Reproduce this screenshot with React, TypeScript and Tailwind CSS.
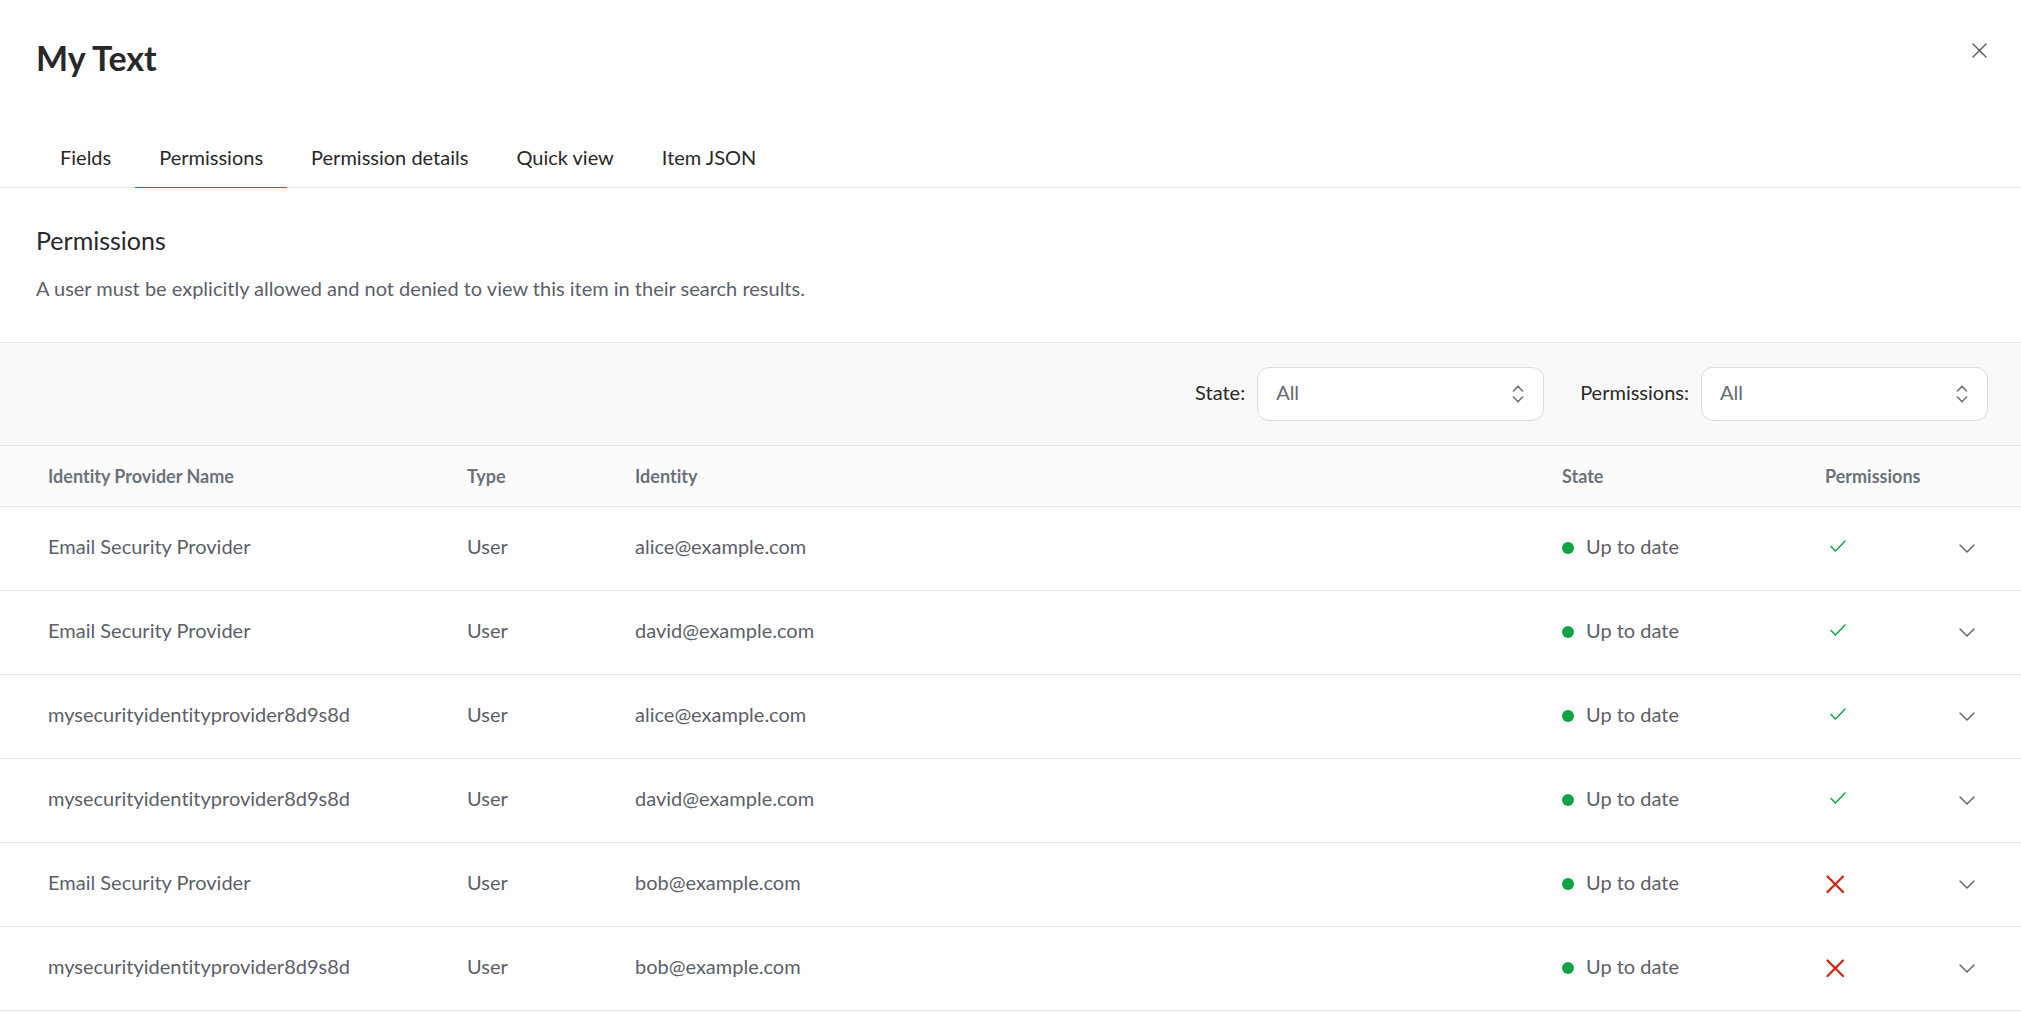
import React, { useState } from 'react';

interface PermissionRow {
  id: number;
  provider: string;
  type: string;
  identity: string;
  allowed: boolean;
}

const TABS = ['Fields', 'Permissions', 'Permission details', 'Quick view', 'Item JSON'];

const ROWS: PermissionRow[] = [
  { id: 1, provider: 'Email Security Provider', type: 'User', identity: 'alice@example.com', allowed: true },
  { id: 2, provider: 'Email Security Provider', type: 'User', identity: 'david@example.com', allowed: true },
  { id: 3, provider: 'mysecurityidentityprovider8d9s8d', type: 'User', identity: 'alice@example.com', allowed: true },
  { id: 4, provider: 'mysecurityidentityprovider8d9s8d', type: 'User', identity: 'david@example.com', allowed: true },
  { id: 5, provider: 'Email Security Provider', type: 'User', identity: 'bob@example.com', allowed: false },
  { id: 6, provider: 'mysecurityidentityprovider8d9s8d', type: 'User', identity: 'bob@example.com', allowed: false },
];

interface IconProps {
  d: string;
  width: number;
  height: number;
  stroke: number;
  className?: string;
}

function Icon({ d, width, height, stroke, className }: IconProps) {
  return (
    <svg
      width={width}
      height={height}
      viewBox={`0 0 ${width} ${height}`}
      fill="none"
      stroke="currentColor"
      strokeWidth={stroke}
      strokeLinecap="round"
      strokeLinejoin="round"
      className={className}
      aria-hidden="true"
    >
      <path d={d} />
    </svg>
  );
}

interface FilterProps {
  id: string;
  label: string;
  options: string[];
}

function Filter({ id, label, options }: FilterProps) {
  return (
    <div className="flex items-center gap-3">
      <label htmlFor={id} className="pb-1 text-[#282829]">
        {label}
      </label>
      <div className="grid w-[287px] items-center">
        <select
          id={id}
          className="col-start-1 row-start-1 h-[54px] w-full appearance-none rounded-xl border border-[#d9dddd] bg-white px-[18px] pb-1 text-[#626971] outline-none focus:border-blue-500"
        >
          {options.map((option) => (
            <option key={option}>{option}</option>
          ))}
        </select>
        <Icon
          d="M1.5 6 6 1.2 10.5 6M1.5 12 6 16.8 10.5 12"
          width={12}
          height={18}
          stroke={1.6}
          className="pointer-events-none col-start-1 row-start-1 mr-5 justify-self-end text-[#6b7280]"
        />
      </div>
    </div>
  );
}

export default function App() {
  const [activeTab, setActiveTab] = useState('Permissions');
  const [expanded, setExpanded] = useState<number | null>(null);

  return (
    <div className="min-h-screen bg-white font-['Lato',sans-serif] text-xl leading-7 text-[#5b5f69] [font-variant-ligatures:none]">
      <header className="flex items-start justify-between pt-8 pr-[30px] pl-9">
        <h1 className="pt-1 text-[34px] leading-[44px] font-bold text-[#282829]">My Text</h1>
        <button type="button" aria-label="Close" className="mt-[7px] p-1 text-[#4f5763]">
          <Icon d="M1 1 14 14M14 1 1 14" width={15} height={15} stroke={1.4} />
        </button>
      </header>

      {/* Tabs */}
      <div role="tablist" className="mt-[47px] flex border-b border-[#e5e8e8] px-9">
        {TABS.map((tab) => (
          <button
            key={tab}
            type="button"
            role="tab"
            aria-selected={activeTab === tab}
            onClick={() => setActiveTab(tab)}
            className={`-mb-px border-b px-6 pt-4 pb-4 text-[#282829] ${
              activeTab === tab ? 'border-[#1372ec]' : 'border-transparent'
            }`}
          >
            {tab}
          </button>
        ))}
      </div>

      <section className="px-9 pt-9 pb-10">
        <h2 className="text-[25px] leading-8 text-[#282829]">Permissions</h2>
        <p className="mt-[18px]">
          A user must be explicitly allowed and not denied to view this item in their search results.
        </p>
      </section>

      {/* Filters */}
      <div className="flex items-center justify-end gap-9 border-y border-[#e5e8e8] bg-[#f9f9f9] py-6 pr-[33px] pl-9">
        <Filter id="state" label="State:" options={['All', 'Up to date', 'Out of date']} />
        <Filter id="permissions" label="Permissions:" options={['All', 'Allowed', 'Denied']} />
      </div>

      <table className="w-full table-fixed text-left">
        <colgroup>
          <col className="w-[467px]" />
          <col className="w-[168px]" />
          <col />
          <col className="w-[263px]" />
          <col className="w-[123px]" />
          <col className="w-[73px]" />
        </colgroup>
        <thead>
          <tr className="h-[60px] border-b border-[#e5e8e8] bg-[#fcfcfc] text-lg leading-7 text-[#6b727c]">
            <th className="pl-12 font-bold">Identity Provider Name</th>
            <th className="font-bold">Type</th>
            <th className="font-bold">Identity</th>
            <th className="font-bold">State</th>
            <th className="font-bold">Permissions</th>
            <th aria-label="Details" />
          </tr>
        </thead>
        <tbody>
          {ROWS.map((row) => (
            <tr key={row.id} className="h-[84px] border-b border-[#e5e8e8]">
              <td className="pb-1 pl-12">{row.provider}</td>
              <td className="pb-1">{row.type}</td>
              <td className="pb-1">{row.identity}</td>
              <td className="pb-1">
                <div className="flex items-center gap-3">
                  <span className="mt-1 size-3 rounded-full bg-[#12a244]" />
                  Up to date
                </div>
              </td>
              <td>
                {row.allowed ? (
                  <span role="img" aria-label="Allowed" className="flex pb-1 pl-[5px] text-[#12a244]">
                    <Icon d="M1 6.5 5.5 11 15 1" width={17} height={12} stroke={1.5} />
                  </span>
                ) : (
                  <span role="img" aria-label="Denied" className="flex pl-px text-[#d4210f]">
                    <Icon d="M1.5 1.5 17 17M17 1.5 1.5 17" width={19} height={19} stroke={2.2} />
                  </span>
                )}
              </td>
              <td>
                <button
                  type="button"
                  aria-label="Toggle details"
                  aria-expanded={expanded === row.id}
                  onClick={() => setExpanded(expanded === row.id ? null : row.id)}
                  className="ml-[3px] flex p-2 text-[#626971]"
                >
                  <Icon d="M1 1 8 8 15 1" width={16} height={9} stroke={1.5} />
                </button>
              </td>
            </tr>
          ))}
        </tbody>
      </table>
    </div>
  );
}
